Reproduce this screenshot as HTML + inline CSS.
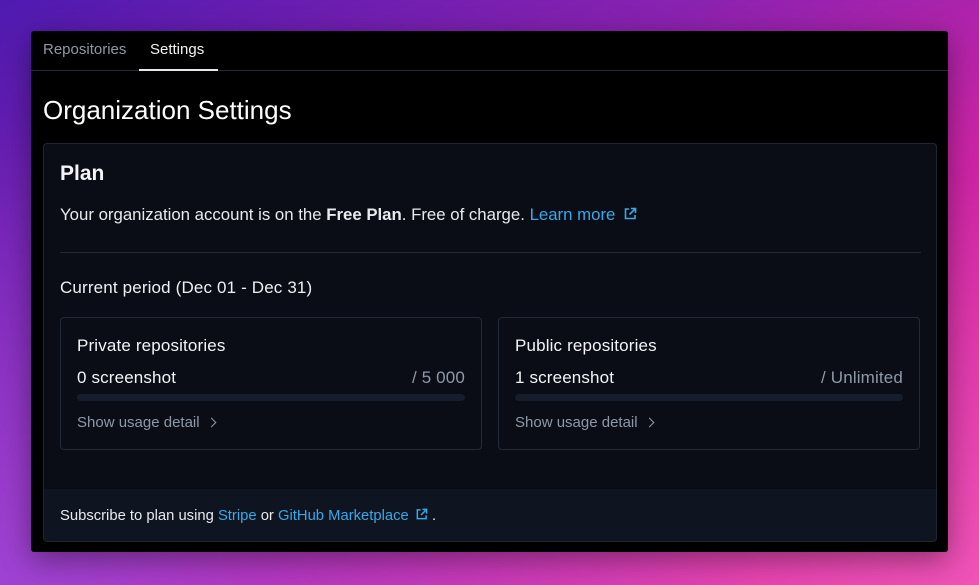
<!DOCTYPE html>
<html><head><style>
*{box-sizing:border-box;margin:0;padding:0}
body{width:979px;height:585px;overflow:hidden;font-family:"Liberation Sans",sans-serif;
background:linear-gradient(150deg,#4f1ab0 0%,#8a22b0 35%,#cc24a6 62%,#e82aa0 100%);position:relative}
.bg2{position:absolute;inset:0;background:radial-gradient(ellipse at 0% 100%,rgba(150,80,230,.7),transparent 55%),radial-gradient(ellipse at 100% 100%,rgba(245,110,200,.6),transparent 50%)}
.win{position:absolute;left:31px;top:31px;width:917px;height:521px;background:#000;border-radius:3px;box-shadow:0 8px 30px rgba(0,0,0,.4)}
.tabs{height:40px;border-bottom:1px solid #232a36;position:relative}
.tab{position:absolute;top:9px;font-size:15px}
.t1{left:12px;color:#8e99a8}
.t2{left:119px;color:#f2f4f7}
.ul{position:absolute;left:108px;top:38px;width:79px;height:2px;background:#e6e8ec}
h1{position:absolute;left:12px;top:64px;font-size:26px;font-weight:normal;color:#fff}
.card{position:absolute;left:12px;top:112px;width:894px;height:399px;background:#0a0d16;border:1px solid #1f2633;border-radius:4px;overflow:hidden}
.abs{position:absolute}
.blue{color:#38a8e8}
.sub{position:absolute;top:0;width:422px;height:133px;border:1px solid #232a37;border-radius:4px}
.bar{position:absolute;left:16px;top:76px;width:388px;height:7px;border-radius:4px;background:#161d2b}
.foot{position:absolute;left:0;bottom:0;width:100%;height:52px;background:#0f1520}
.f17{font-size:17px;letter-spacing:.15px}
.chev{display:inline-block;width:7px;height:7px;border-right:1.6px solid #8e99a8;border-top:1.6px solid #8e99a8;transform:rotate(45deg);margin-left:8px;vertical-align:1px}
</style></head><body><div class="bg2"></div>
<div class="win">
<div class="tabs"><span class="tab t1" style="top:10px">Repositories</span><span class="tab t2" style="top:10px">Settings</span><div class="ul"></div></div>
<h1>Organization Settings</h1>
<div class="card">
<div class="abs" style="left:16px;top:18px;font-size:21px;font-weight:bold;color:#f2f4f7">Plan</div>
<div class="abs" style="left:16px;top:61px;font-size:16.8px;color:#e8eaee">Your organization account is on the <b>Free Plan</b>. Free of charge. <span class="blue">Learn more <svg width="14" height="14" viewBox="0 0 14 14" style="vertical-align:-1px;margin-left:3px" fill="none" stroke="#38a8e8" stroke-width="1.6"><path d="M6 2H2.5v9.5H12V8"/><path d="M8 1.5h4.5V6M12.5 1.5L6.5 7.5"/></svg></span></div>
<div class="abs" style="left:16px;top:108px;width:861px;height:1px;background:#232a37"></div>
<div class="abs f17" style="left:16px;top:134px;color:#eef0f3">Current period (Dec 01 - Dec 31)</div>
<div class="abs" style="left:16px;top:173px;width:861px;height:133px">
<div class="sub" style="left:0">
<div class="abs f17" style="left:16px;top:18px;color:#f2f4f7">Private repositories</div>
<div class="abs f17" style="left:16px;top:50px;color:#f2f4f7">0 screenshot</div>
<div class="abs f17" style="right:16px;top:50px;color:#8e99a8">/ 5 000</div>
<div class="bar"></div>
<div class="abs" style="left:16px;top:96px;font-size:15px;color:#8e99a8">Show usage detail<span class="chev"></span></div>
</div>
<div class="sub" style="left:438px">
<div class="abs f17" style="left:16px;top:18px;color:#f2f4f7">Public repositories</div>
<div class="abs f17" style="left:16px;top:50px;color:#f2f4f7">1 screenshot</div>
<div class="abs f17" style="right:16px;top:50px;color:#8e99a8">/ Unlimited</div>
<div class="bar"></div>
<div class="abs" style="left:16px;top:96px;font-size:15px;color:#8e99a8">Show usage detail<span class="chev"></span></div>
</div>
</div>
<div class="foot"><div class="abs" style="left:16px;top:19px;font-size:14.8px;color:#e8eaee">Subscribe to plan using <span class="blue">Stripe</span> or <span class="blue">GitHub Marketplace <svg width="13" height="13" viewBox="0 0 14 14" style="vertical-align:-1px;margin-left:2px" fill="none" stroke="#38a8e8" stroke-width="1.6"><path d="M6 2H2.5v9.5H12V8"/><path d="M8 1.5h4.5V6M12.5 1.5L6.5 7.5"/></svg></span> .</div></div>
</div>
</div>
</body></html>
